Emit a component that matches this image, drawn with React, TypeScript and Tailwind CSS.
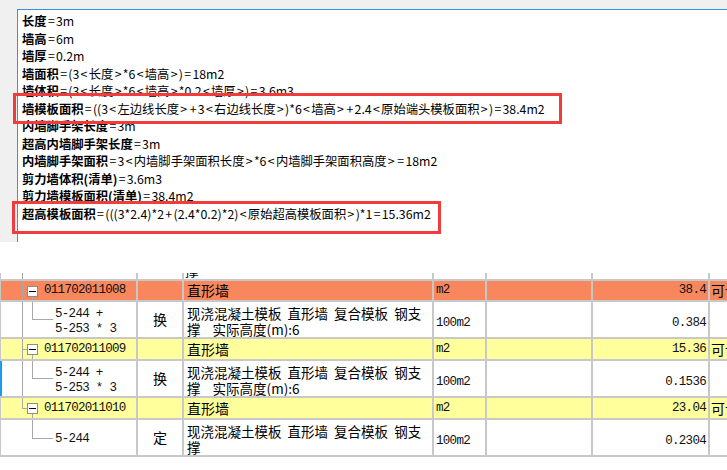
import React from 'react';

const lines: [string, string][] = [
  ['长度', '=3m'],
  ['墙高', '=6m'],
  ['墙厚', '=0.2m'],
  ['墙面积', '=(3<长度>*6<墙高>)=18m2'],
  ['墙体积', '=(3<长度>*6<墙高>*0.2<墙厚>)=3.6m3'],
  ['墙模板面积', '=((3<左边线长度>+3<右边线长度>)*6<墙高>+2.4<原始端头模板面积>)=38.4m2'],
  ['内墙脚手架长度', '=3m'],
  ['超高内墙脚手架长度', '=3m'],
  ['内墙脚手架面积', '=3<内墙脚手架面积长度>*6<内墙脚手架面积高度>=18m2'],
  ['剪力墙体积(清单)', '=3.6m3'],
  ['剪力墙模板面积(清单)', '=38.4m2'],
  ['超高模板面积', '=(((3*2.4)*2+(2.4*0.2)*2)<原始超高模板面积>)*1=15.36m2'],
];

function Formula({ text }: { text: string }) {
  const parts = text.split(/([<>=+])/).filter((p) => p !== '');
  return (
    <>
      {parts.map((p, i) =>
        /^[<>=+]$/.test(p) ? (
          <span key={i} className="px-[1.3px]">
            {p}
          </span>
        ) : (
          <span key={i}>{p}</span>
        )
      )}
    </>
  );
}

function HeaderRow({ code, qty, bg, h, lastNode }: { code: string; qty: string; bg: string; h: string; lastNode?: boolean }) {
  return (
    <div className={`flex ${h} border-b-2 border-[#c8c8c8] ${bg}`}>
      <div className="w-[22px] shrink-0 border-l border-[#c8c8c8]" />
      <div className="relative w-[116px] shrink-0 border-r-2 border-[#c8c8c8] flex items-center">
        <div className={`absolute left-0 top-0 w-px bg-[#a8a8a8] ${lastNode ? 'h-[11px]' : 'h-full'}`} />
        <div className="absolute left-0 top-[10px] w-[5px] h-px bg-[#a8a8a8]" />
        <div className="absolute left-[5px] top-[5px] w-[11px] h-[11px] border border-[#8c8c8c] bg-white flex items-center justify-center">
          <div className="w-[7px] h-px bg-black" />
        </div>
        <div className="absolute left-[10px] top-[16px] bottom-0 w-px bg-[#a8a8a8]" />
        <span className="ml-[22px] font-['Liberation_Mono',monospace] text-[12.5px] tracking-[-0.7px] text-[#111] whitespace-nowrap">{code}</span>
      </div>
      <div className="w-[46px] shrink-0 border-r-2 border-[#c8c8c8]" />
      <div className="w-[250px] shrink-0 border-r-2 border-[#c8c8c8] flex items-center pl-[3px] font-['Noto_Sans_CJK_SC','Noto_Sans',sans-serif] text-[14px] text-black">
        直形墙
      </div>
      <div className="w-[53px] shrink-0 border-r-2 border-[#c8c8c8] flex items-center pl-[2px] font-['Liberation_Mono',monospace] text-[12.5px] tracking-[-0.7px] text-[#111]">
        m2
      </div>
      <div className="w-[106px] shrink-0 border-r-2 border-[#c8c8c8]" />
      <div className="w-[117px] shrink-0 border-r-2 border-[#c8c8c8] flex items-center justify-end pr-[2px] font-['Liberation_Mono',monospace] text-[12.5px] tracking-[-0.7px] text-[#111]">
        {qty}
      </div>
      <div className="flex-1 overflow-hidden flex items-center pl-[1px] font-['Noto_Sans_CJK_SC','Noto_Sans',sans-serif] text-[14px] text-black whitespace-nowrap">
        可计量
      </div>
    </div>
  );
}

function ChildRow({
  code1,
  code2,
  type,
  desc2,
  qty,
  parentContinues,
  selected,
}: {
  code1: string;
  code2?: string;
  type: string;
  desc2: string;
  qty: string;
  parentContinues?: boolean;
  selected?: boolean;
}) {
  return (
    <div className="flex h-[37px] border-b-2 border-[#c8c8c8] bg-white">
      <div className={`w-[22px] shrink-0 ${selected ? 'border-l-2 border-[#1e9be8]' : 'border-l border-[#c8c8c8]'}`} />
      <div className="relative w-[116px] shrink-0 border-r-2 border-[#c8c8c8]">
        {parentContinues && <div className="absolute left-0 top-0 h-full w-px bg-[#a8a8a8]" />}
        {code2 ? (
          <>
            <div className="absolute left-[10px] top-0 h-[17px] w-px bg-[#a8a8a8]" />
            <div className="absolute left-[10px] top-[17px] w-[21px] h-px bg-[#a8a8a8]" />
            <div className="pl-[33px] pt-[5px] leading-[15px] font-['Liberation_Mono',monospace] text-[12.5px] tracking-[-0.7px] text-[#111] whitespace-pre">
              <div>{code1}</div>
              <div>{code2}</div>
            </div>
          </>
        ) : (
          <>
            <div className="absolute left-[10px] top-0 h-[18px] w-px bg-[#a8a8a8]" />
            <div className="absolute left-[10px] top-[18px] w-[21px] h-px bg-[#a8a8a8]" />
            <div className="pl-[33px] pt-[12px] leading-[15px] font-['Liberation_Mono',monospace] text-[12.5px] tracking-[-0.7px] text-[#111] whitespace-pre">
              {code1}
            </div>
          </>
        )}
      </div>
      <div className="w-[46px] shrink-0 border-r-2 border-[#c8c8c8] flex items-center justify-center font-['Noto_Sans_CJK_SC','Noto_Sans',sans-serif] text-[14px] text-black">
        {type}
      </div>
      <div className="w-[250px] shrink-0 border-r-2 border-[#c8c8c8] pl-[3px] pt-[3px] leading-[16px] font-['Noto_Sans_CJK_SC','Noto_Sans',sans-serif] text-[13.5px] text-black whitespace-pre overflow-hidden">
        <div>{'现浇混凝土模板  直形墙  复合模板  钢支'}</div>
        <div>{desc2}</div>
      </div>
      <div className="w-[53px] shrink-0 border-r-2 border-[#c8c8c8] pl-[2px] pt-[14px] leading-[14px] font-['Liberation_Mono',monospace] text-[12.5px] tracking-[-0.7px] text-[#111]">
        100m2
      </div>
      <div className="w-[106px] shrink-0 border-r-2 border-[#c8c8c8]" />
      <div className="w-[117px] shrink-0 border-r-2 border-[#c8c8c8] pr-[2px] pt-[14px] leading-[14px] text-right font-['Liberation_Mono',monospace] text-[12.5px] tracking-[-0.7px] text-[#111]">
        {qty}
      </div>
      <div className="flex-1" />
    </div>
  );
}

export default function App() {
  return (
    <div className="w-[727px] h-[470px] bg-white overflow-hidden">
      <div className="relative h-[242px] bg-[#f0f0f0] pl-[17px] pt-[9px]">
        <div className="h-full bg-white border-l border-t border-[#3d8fdc] pl-[4px] pt-[3px] text-[12.3px] leading-[17.5px] text-black font-['Noto_Sans_CJK_SC','Noto_Sans',sans-serif]">
          {lines.map(([label, rest], i) => (
            <div key={i} className="whitespace-nowrap">
              <span className="font-bold">{label}</span>
              <Formula text={rest} />
            </div>
          ))}
        </div>
        <div className="absolute left-[13px] top-[93px] w-[549px] h-[31px] border-[3px] border-[#f23b3b]" />
        <div className="absolute left-[12px] top-[201px] w-[429px] h-[33px] border-[3px] border-[#f23b3b]" />
      </div>

      <div className="h-[31px]" />

      <div className="w-[727px]">
        <div className="flex h-[8px] border-b-2 border-[#c8c8c8] bg-white">
          <div className="w-[22px] shrink-0 border-l border-[#c8c8c8]" />
          <div className="relative w-[116px] shrink-0 border-r-2 border-[#c8c8c8]">
            <div className="absolute left-0 top-0 h-full w-px bg-[#a8a8a8]" />
          </div>
          <div className="w-[46px] shrink-0 border-r-2 border-[#c8c8c8]" />
          <div className="w-[250px] shrink-0 border-r-2 border-[#c8c8c8] overflow-hidden pl-[1px]">
            <div className="-mt-[11px] leading-[16px] font-['Noto_Sans_CJK_SC','Noto_Sans',sans-serif] text-[13.5px] text-black">撑</div>
          </div>
          <div className="w-[53px] shrink-0 border-r-2 border-[#c8c8c8]" />
          <div className="w-[106px] shrink-0 border-r-2 border-[#c8c8c8]" />
          <div className="w-[117px] shrink-0 border-r-2 border-[#c8c8c8]" />
          <div className="flex-1" />
        </div>

        <HeaderRow code="011702011008" qty="38.4" bg="bg-[#f8875e]" h="h-[21px]" />
        <ChildRow code1="5-244 +" code2="5-253 * 3" type="换" desc2={'撑    实际高度(m):6'} qty="0.384" parentContinues />
        <HeaderRow code="011702011009" qty="15.36" bg="bg-[#ffff9c]" h="h-[22px]" />
        <ChildRow code1="5-244 +" code2="5-253 * 3" type="换" desc2={'撑    实际高度(m):6'} qty="0.1536" parentContinues selected />
        <HeaderRow code="011702011010" qty="23.04" bg="bg-[#ffff9c]" h="h-[22px]" lastNode />
        <ChildRow code1="5-244" type="定" desc2="撑" qty="0.2304" />
      </div>
    </div>
  );
}
